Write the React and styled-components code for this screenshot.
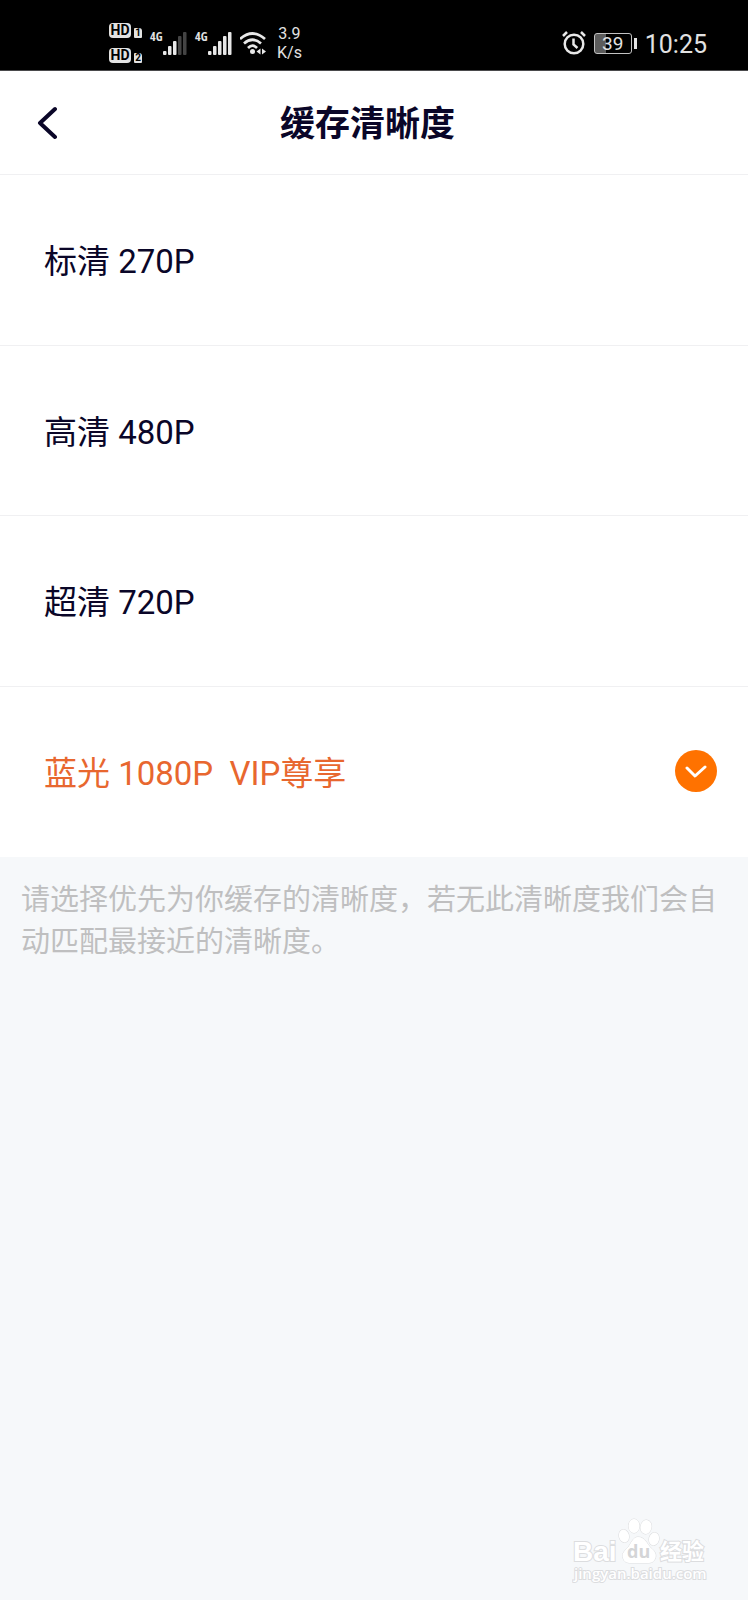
import React, { useState } from "react";
import styled, { createGlobalStyle } from "styled-components";

const GlobalStyle = createGlobalStyle`
  *, *::before, *::after { box-sizing: border-box; }
  html, body, #root { min-height: 100vh; }
  body {
    margin: 0;
    background: #f6f8fa;
    color: #0a0628;
    font-family: Roboto, "Noto Sans CJK SC", sans-serif;
  }
`;

const Page = styled.div`
  min-height: 100vh;
  display: flex;
  flex-direction: column;
`;

const StatusBar = styled.div`
  height: 71px;
  padding: 15px 41px 0 109px;
  display: flex;
  justify-content: space-between;
  background: #000;
  border-bottom: 1px solid #4a4a4c;
  color: #e2e2e2;
`;

const StatusGroup = styled.div`
  height: 56px;
  display: flex;
  align-items: center;
  gap: ${({ $gap }) => $gap}px;
`;

const SimList = styled.div`
  display: flex;
  flex-direction: column;
  gap: 10px;
`;

const Sim = styled.div`
  display: flex;
  align-items: flex-end;
  gap: 3px;
  line-height: 15px;
  color: #000;
`;

const HdBadge = styled.span`
  width: 22px;
  height: 15px;
  border-radius: 4px;
  background: #e2e2e2;
  font-size: 14px;
  font-weight: 700;
  text-align: center;
`;

const SimNumber = styled.span`
  width: 8px;
  height: 10px;
  border-radius: 1px 3px 1px 1px;
  background: #e2e2e2;
  font-size: 10px;
  font-weight: 700;
  line-height: 10px;
  text-align: center;
`;

const Network = styled.div`
  display: flex;
  align-items: flex-start;
`;

const NetworkLabel = styled.span`
  width: 13px;
  font-family: "Open Sans", sans-serif;
  font-stretch: condensed;
  font-size: 12px;
  font-weight: 700;
  line-height: 12px;
  white-space: nowrap;
`;

const Speed = styled.div`
  margin-left: 1px;
  font-size: 16px;
  line-height: 19px;
  text-align: center;
`;

const Battery = styled.div`
  display: flex;
  align-items: center;
  gap: 2px;
  &::after {
    content: "";
    width: 3px;
    height: 11px;
    background: #e2e2e2;
  }
`;

const BatteryBody = styled.span`
  width: 38px;
  height: 21px;
  border: 1px solid #c2c2c2;
  border-radius: 3px;
  background: linear-gradient(90deg, #5c5c5c 30%, #000 30%);
  font-size: 19px;
  line-height: 20px;
  text-align: center;
`;

const Clock = styled.time`
  padding-top: 3px;
  font-size: 25px;
  line-height: 30px;
`;

const Header = styled.header`
  height: 104px;
  padding: 0 40px 0 27px;
  display: grid;
  grid-template-columns: 40px 1fr 40px;
  align-items: center;
  background: #fff;
  border-bottom: 1px solid #f0f0f2;
`;

const BackButton = styled.button`
  width: 40px;
  height: 48px;
  padding: 0;
  border: 0;
  background: none;
  color: inherit;
  display: grid;
  place-items: center;
  cursor: pointer;
`;

const Title = styled.h1`
  margin: 0;
  padding-top: 5px;
  font-size: 35px;
  font-weight: 700;
  line-height: 48px;
  text-align: center;
`;

const Options = styled.fieldset`
  height: 682px;
  margin: 0;
  padding: 0;
  border: 0;
  display: grid;
  grid-auto-rows: 1fr;
  background: #fff;
`;

const Option = styled.label`
  padding: 0 31px 0 44px;
  display: flex;
  align-items: center;
  justify-content: space-between;
  border-bottom: 1px solid #f0f0f2;
  color: ${({ $selected }) => ($selected ? "#e8672f" : "inherit")};
  cursor: pointer;
  &:last-child { border-bottom-color: #fff; }
`;

const OptionText = styled.span`
  padding-top: 5px;
  font-size: 33px;
  line-height: 48px;
  white-space: pre;
`;

const Choice = styled.span`
  display: grid;
  place-items: center;
  > * { grid-area: 1 / 1; }
`;

const Radio = styled.input`
  appearance: none;
  width: 42px;
  height: 42px;
  margin: 0;
  border-radius: 50%;
  cursor: pointer;
  &:checked { background: #ff7200; }
`;

const Tick = styled.svg`
  pointer-events: none;
`;

const Note = styled.p`
  margin: 0;
  padding: 22px 21px;
  color: #bfbfc0;
  font-size: 29px;
  line-height: 42px;
`;

const Footer = styled.footer`
  margin-top: auto;
  padding: 0 36px 14px 0;
  display: flex;
  justify-content: flex-end;
`;

const qualities = [
  { id: "270", label: "标清 270P" },
  { id: "480", label: "高清 480P" },
  { id: "720", label: "超清 720P" },
  { id: "1080", label: "蓝光 1080P  VIP尊享" },
];

function Signal({ level }) {
  return (
    <Network>
      <NetworkLabel>4G</NetworkLabel>
      <svg width="24" height="24" aria-hidden="true">
        {[4, 9, 14, 19, 23].map((h, i) => (
          <rect key={h} x={i * 5} y={24 - h} width="3.500" height={h} rx="1" fill={i < level ? "#e8e8e8" : "#444"} />
        ))}
      </svg>
    </Network>
  );
}

function Wifi() {
  return (
    <svg width="28" height="24" viewBox="0 0 28 24" fill="none" stroke="#e8e8e8" strokeWidth="2.7" aria-hidden="true">
      <path d="M0 8Q12.500-3 25 8M4 12.500Q12.500 5 21 12.500M8 17Q12.500 12.500 17 17" />
      <circle cx="12.500" cy="20.500" r="2.500" fill="#e8e8e8" stroke="none" />
      <path d="M20.500 17.500v6l-4-3zM22 17.500v6l4-3z" fill="#e8e8e8" stroke="none" />
    </svg>
  );
}

function Alarm() {
  return (
    <svg width="24" height="24" viewBox="0 0 24 24" fill="none" stroke="#e8e8e8" strokeWidth="2.500" aria-hidden="true">
      <circle cx="12" cy="13" r="9.300" />
      <path d="M11.500 7.500v6l4 3.500M1 5l4-4M23 5l-4-4" />
    </svg>
  );
}

function Watermark() {
  return (
    <svg width="140" height="68" viewBox="0 0 140 68" role="img" aria-label="Baidu 经验">
      <g fill="#fff" stroke="#dcdddf" strokeWidth="1" paintOrder="stroke">
        <ellipse cx="52" cy="18" rx="5" ry="6.500" transform="rotate(-15 52 18)" />
        <ellipse cx="62" cy="8" rx="5.500" ry="7" />
        <ellipse cx="74" cy="9" rx="5.500" ry="7" transform="rotate(12 74 9)" />
        <ellipse cx="82" cy="21" rx="5" ry="6.500" transform="rotate(15 82 21)" />
        <path d="M66 19c7 0 9 7 13 11 4 3 6 7 4 11s-5 4-9 4H59c-4 0-7-1-8-5-2-5 3-8 6-12 3-5 5-9 9-9z" />
        <g strokeWidth="2">
          <text x="1" y="43" fontFamily="Liberation Sans, sans-serif" fontSize="28" fontWeight="700">Bai</text>
          <text x="88" y="41" fontFamily="Noto Sans CJK SC, sans-serif" fontSize="22" fontWeight="700">经验</text>
          <text x="2" y="61" fontFamily="Open Sans, sans-serif" fontSize="15" fontWeight="600">jingyan.baidu.com</text>
        </g>
        <text x="55" y="40" fill="#d4d5d7" stroke="none" fontFamily="Open Sans, sans-serif" fontSize="18" fontWeight="700">du</text>
      </g>
    </svg>
  );
}

export default function App() {
  const [selected, setSelected] = useState("1080");
  return (
    <Page>
      <GlobalStyle />
      <StatusBar>
        <StatusGroup $gap={8}>
          <SimList>
            {["1", "2"].map((n) => (
              <Sim key={n}>
                <HdBadge>HD</HdBadge>
                <SimNumber>{n}</SimNumber>
              </Sim>
            ))}
          </SimList>
          <Signal level={3} />
          <Signal level={5} />
          <Wifi />
          <Speed>
            3.9
            <br />
            K/s
          </Speed>
        </StatusGroup>
        <StatusGroup $gap={8}>
          <Alarm />
          <Battery>
            <BatteryBody>39</BatteryBody>
          </Battery>
          <Clock>10:25</Clock>
        </StatusGroup>
      </StatusBar>
      <Header>
        <BackButton type="button" aria-label="返回">
          <svg width="20" height="34" viewBox="0 0 20 34" fill="none" stroke="currentColor" strokeWidth="4" strokeLinecap="round" strokeLinejoin="round" aria-hidden="true">
            <path d="M18 3L3 17l15 14" />
          </svg>
        </BackButton>
        <Title>缓存清晰度</Title>
      </Header>
      <main>
        <Options aria-label="缓存清晰度">
          {qualities.map(({ id, label }) => (
            <Option key={id} $selected={selected === id}>
              <OptionText>{label}</OptionText>
              <Choice>
                <Radio type="radio" name="quality" value={id} checked={selected === id} onChange={() => setSelected(id)} />
                {selected === id && (
                  <Tick width="22" height="14" viewBox="0 0 22 14" fill="none" stroke="#fff" strokeWidth="3" strokeLinecap="round" strokeLinejoin="round" aria-hidden="true">
                    <path d="M2 4l8 8 10-9" />
                  </Tick>
                )}
              </Choice>
            </Option>
          ))}
        </Options>
        <Note>请选择优先为你缓存的清晰度，若无此清晰度我们会自动匹配最接近的清晰度。</Note>
      </main>
      <Footer>
        <Watermark />
      </Footer>
    </Page>
  );
}
